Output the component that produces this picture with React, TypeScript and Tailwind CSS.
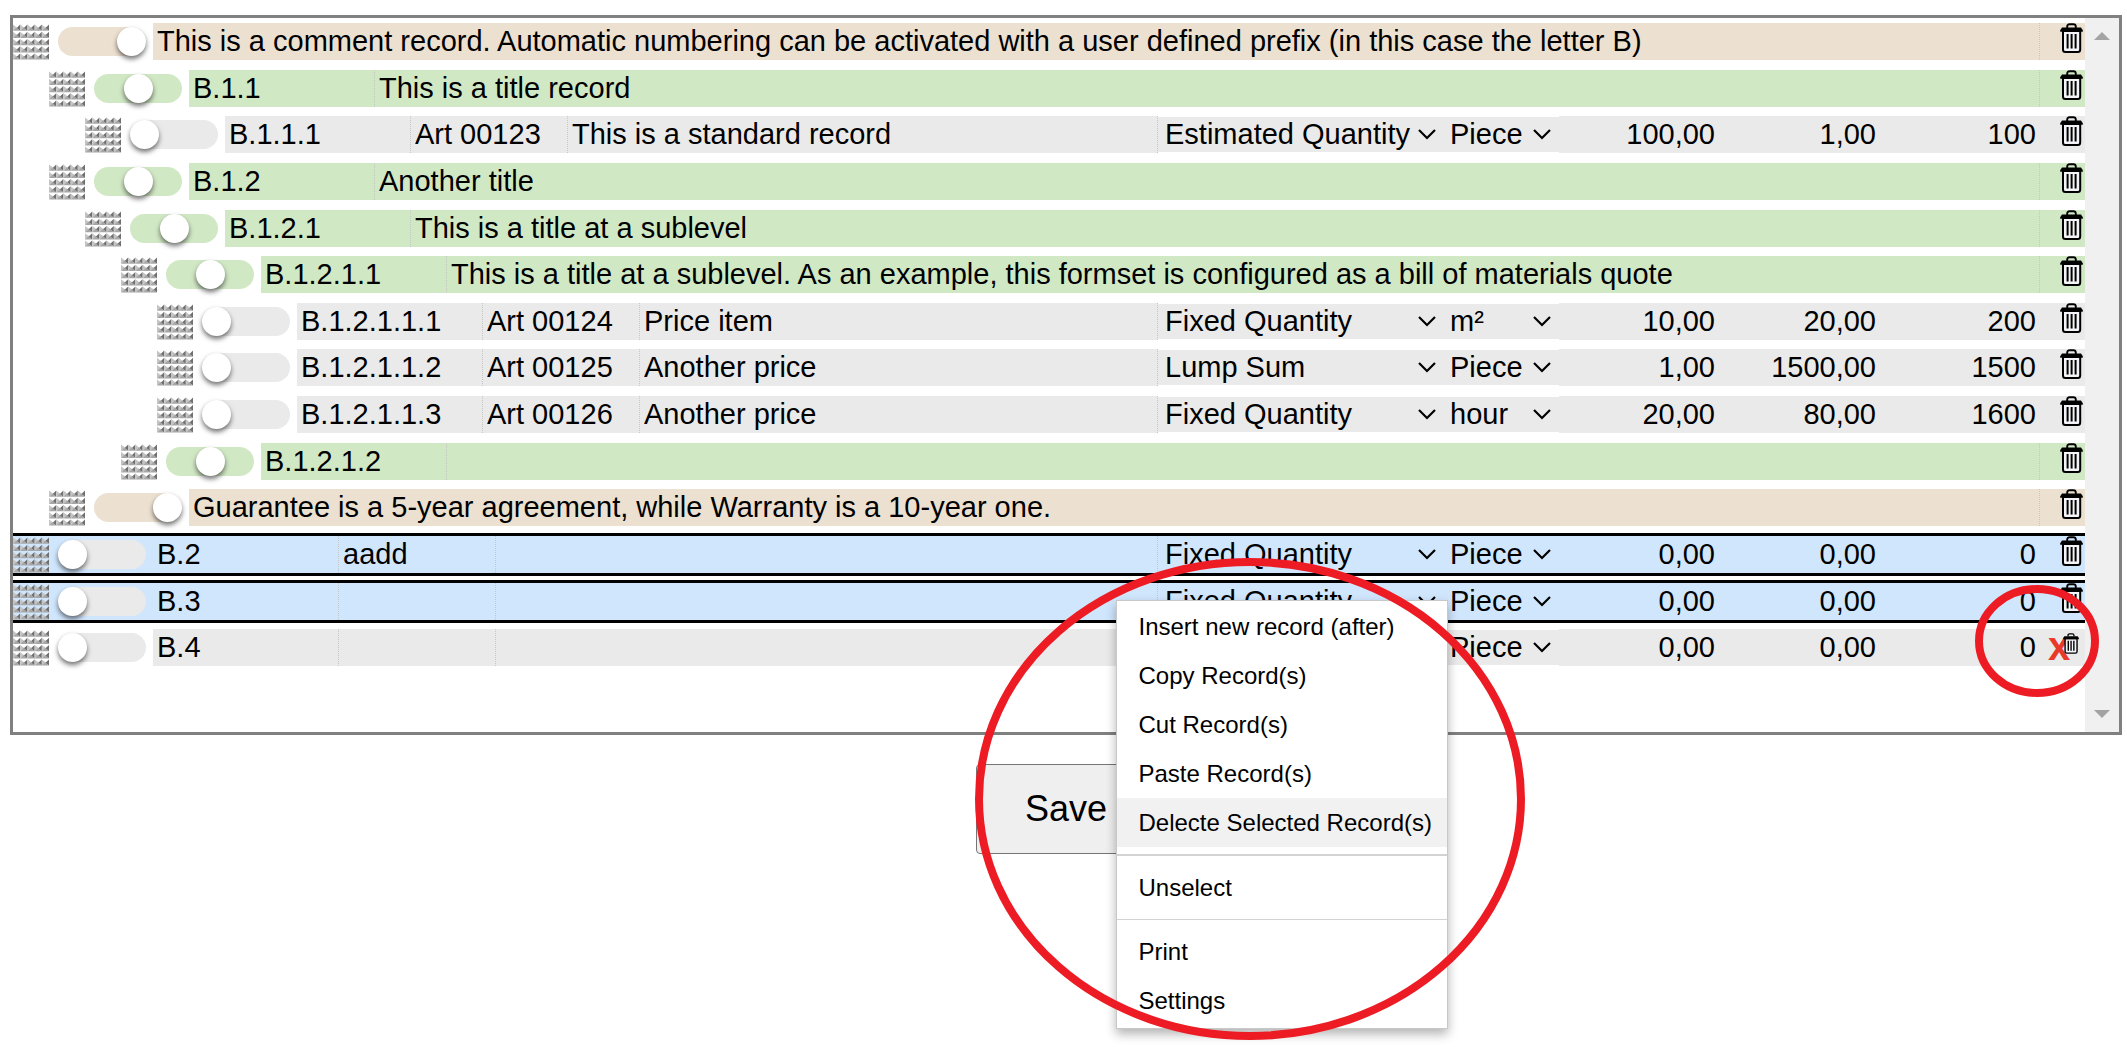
import React from "react";

type Kind = "comment" | "title" | "item";

interface RecordRow {
  kind: Kind;
  level: number;
  code?: string;
  article?: string;
  text?: string;
  quantityType?: string;
  unit?: string;
  quantity?: string;
  price?: string;
  total?: string;
  selected?: boolean;
  cut?: boolean;
}

const RECORDS: RecordRow[] = [
  { kind: "comment", level: 0, text: "This is a comment record. Automatic numbering can be activated with a user defined prefix (in this case the letter B)" },
  { kind: "title", level: 1, code: "B.1.1", text: "This is a title record" },
  { kind: "item", level: 2, code: "B.1.1.1", article: "Art 00123", text: "This is a standard record", quantityType: "Estimated Quantity", unit: "Piece", quantity: "100,00", price: "1,00", total: "100" },
  { kind: "title", level: 1, code: "B.1.2", text: "Another title" },
  { kind: "title", level: 2, code: "B.1.2.1", text: "This is a title at a sublevel" },
  { kind: "title", level: 3, code: "B.1.2.1.1", text: "This is a title at a sublevel. As an example, this formset is configured as a bill of materials quote" },
  { kind: "item", level: 4, code: "B.1.2.1.1.1", article: "Art 00124", text: "Price item", quantityType: "Fixed Quantity", unit: "m²", quantity: "10,00", price: "20,00", total: "200" },
  { kind: "item", level: 4, code: "B.1.2.1.1.2", article: "Art 00125", text: "Another price", quantityType: "Lump Sum", unit: "Piece", quantity: "1,00", price: "1500,00", total: "1500" },
  { kind: "item", level: 4, code: "B.1.2.1.1.3", article: "Art 00126", text: "Another price", quantityType: "Fixed Quantity", unit: "hour", quantity: "20,00", price: "80,00", total: "1600" },
  { kind: "title", level: 3, code: "B.1.2.1.2", text: "" },
  { kind: "comment", level: 1, text: "Guarantee is a 5-year agreement, while Warranty is a 10-year one." },
  { kind: "item", level: 0, code: "B.2", article: "aadd", text: "", quantityType: "Fixed Quantity", unit: "Piece", quantity: "0,00", price: "0,00", total: "0", selected: true },
  { kind: "item", level: 0, code: "B.3", article: "", text: "", quantityType: "Fixed Quantity", unit: "Piece", quantity: "0,00", price: "0,00", total: "0", selected: true },
  { kind: "item", level: 0, code: "B.4", article: "", text: "", quantityType: "Fixed Quantity", unit: "Piece", quantity: "0,00", price: "0,00", total: "0", cut: true },
];

const INDENT = ["pl-0", "pl-[36px]", "pl-[72px]", "pl-[108px]", "pl-[144px]"];
const FILL: Record<Kind, string> = { comment: "bg-[#ece0d1]", title: "bg-[#d1e8c5]", item: "bg-[#eaeaea]" };
const KNOB: Record<Kind, string> = { comment: "justify-end", title: "justify-center", item: "justify-start" };
const QUANTITY_TYPES = ["Estimated Quantity", "Fixed Quantity", "Lump Sum"];
const UNITS = ["Piece", "m²", "hour"];
const DIVIDER = "border-dotted border-[#c6c6c6]";

function DragHandle() {
  const cells = [0, 1, 2, 3, 4];
  return (
    <button type="button" aria-label="Move record" className="mt-px size-9 shrink-0 cursor-grab">
      <svg viewBox="0 0 36 36" className="block size-9">
        {cells.map((r) =>
          cells.map((c) => (
            <g key={`${r}-${c}`} transform={`translate(${c * 7.2} ${r * 7.2 + 0.6})`}>
              <path d="M0 0V6.2L4 3.1Z" fill="#c4c4c4" />
              <path d="M7.2 0L3.4 3.6L7.2 6.2Z" fill="#6f6f6f" />
              <path d="M0 6.2L3.6 2.8L7.2 6.2Z" fill="#a6a6a6" />
            </g>
          )),
        )}
      </svg>
    </button>
  );
}

function TrashIcon({ className }: { className: string }) {
  return (
    <svg viewBox="0 0 23 30" className={className} aria-hidden="true">
      <path d="M7.2 5V3.6Q7.2 1.2 9.6 1.2H13.4Q15.8 1.2 15.8 3.6V5" fill="none" stroke="#000" strokeWidth="1.9" />
      <path d="M3 8H20.2V26.4Q20.2 28.9 17.8 28.9H5.4Q3 28.9 3 26.4Z" fill="#f4f4f8" stroke="#000" strokeWidth="2" />
      <path d="M2 4.6H21L22.8 7.2V8.8H0.2V7.2Z" fill="#000" />
      <path d="M7.6 11V25.6M11.6 11V25.6M15.6 11V25.6" stroke="#000" strokeWidth="2" />
    </svg>
  );
}

function Chevron() {
  return (
    <svg viewBox="0 0 18 11" className="pointer-events-none absolute top-3 right-2 h-[11px] w-[18px]" aria-hidden="true">
      <path d="M1 1L9 9L17 1" fill="none" stroke="#000" strokeWidth="2.2" />
    </svg>
  );
}

function Picker({ label, value, options, className }: { label: string; value?: string; options: string[]; className: string }) {
  return (
    <div className={`relative ${className}`}>
      <select aria-label={label} defaultValue={value} className="block h-[35px] w-full appearance-none bg-transparent pl-1 leading-[35px] outline-none">
        {options.map((o) => (
          <option key={o}>{o}</option>
        ))}
      </select>
      <Chevron />
    </div>
  );
}

function Field({ label, value, className }: { label: string; value?: string; className: string }) {
  return <input aria-label={label} defaultValue={value} className={`h-[37px] min-w-0 leading-[37px] outline-none ${className}`} />;
}

function Row({ record }: { record: RecordRow }) {
  const { kind, selected } = record;
  const fill = selected ? "bg-transparent" : FILL[kind];
  return (
    <li className={INDENT[record.level]}>
      <div className={`flex h-[43px] border-y-[3px] ${selected ? "border-black bg-[#d0e6fd]" : "border-transparent"}`}>
        <DragHandle />
        <button
          type="button"
          aria-label="Record type"
          className={`mx-[9px] mt-1 mr-[7px] flex h-[29px] w-[88px] shrink-0 rounded-full ${FILL[kind]} ${KNOB[kind]}`}
        >
          <span className="size-[29px] rounded-full bg-white shadow-[0_3px_5px_rgba(0,0,0,0.55)]" />
        </button>
        {record.code !== undefined && <Field label="Number" value={record.code} className={`w-[186px] shrink-0 border-r pl-[4px] ${DIVIDER} ${fill}`} />}
        {record.article !== undefined && <Field label="Article" value={record.article} className={`w-[157px] shrink-0 border-r pl-[4px] ${DIVIDER} ${fill}`} />}
        <Field label="Description" value={record.text} className={`flex-1 border-r pl-[4px] ${DIVIDER} ${fill}`} />
        {kind === "item" && (
          <>
            <div className={`mt-px flex h-[35px] pl-[3px] ${fill}`}>
              <Picker label="Quantity type" value={record.quantityType} options={QUANTITY_TYPES} className="w-[285px] pr-[2px] [&>svg]:right-[10px]" />
              <Picker label="Unit" value={record.unit} options={UNITS} className="w-[113px]" />
            </div>
            <Field label="Quantity" value={record.quantity} className={`w-[160px] pr-1 text-right ${fill}`} />
            <Field label="Unit price" value={record.price} className={`w-[161px] pr-1 text-right ${fill}`} />
            <Field label="Total" value={record.total} className={`w-[160px] pr-1 text-right ${fill}`} />
          </>
        )}
        <div className={`relative flex w-[45px] shrink-0 justify-end pr-[2px] ${fill}`}>
          {record.cut ? (
            <>
              <span className="absolute -top-[3px] left-2 text-[40px] leading-[40px] font-bold text-[#e8392a]">x</span>
              <button type="button" aria-label="Delete record" className="relative mt-1 mr-1 h-[21px]">
                <TrashIcon className="block h-[21px] w-4" />
              </button>
              <svg viewBox="0 0 124 112" className="pointer-events-none absolute -top-11 -right-[14px] z-20 h-28 w-[124px] max-w-none" aria-hidden="true">
                <ellipse cx="62" cy="56" rx="58" ry="52" fill="none" stroke="#ed1c24" strokeWidth="8" />
              </svg>
            </>
          ) : (
            <button type="button" aria-label="Delete record" className="h-[30px]">
              <TrashIcon className="block h-[30px] w-[23px]" />
            </button>
          )}
        </div>
      </div>
    </li>
  );
}

function MenuItem({ children, active }: { children: string; active?: boolean }) {
  return (
    <button type="button" role="menuitem" className={`block h-[49px] w-full pl-[22px] text-left whitespace-nowrap ${active ? "bg-[#f1f1f1]" : ""}`}>
      {children}
    </button>
  );
}

function ContextMenu() {
  return (
    <div className="absolute top-[600px] left-1/2 z-10 ml-[52px] w-[332px]">
      <div role="menu" className="border border-[#c8c8c8] bg-white pt-px pb-[3px] text-[24px] shadow-[0_5px_10px_rgba(0,0,0,0.3)]">
        <MenuItem>Insert new record (after)</MenuItem>
        <MenuItem>Copy Record(s)</MenuItem>
        <MenuItem>Cut Record(s)</MenuItem>
        <MenuItem>Paste Record(s)</MenuItem>
        <MenuItem active>Delecte Selected Record(s)</MenuItem>
        <hr className="my-[7px] border-t-2 border-[#d3d3d3]" />
        <MenuItem>Unselect</MenuItem>
        <hr className="my-[7px] border-t border-[#d3d3d3]" />
        <MenuItem>Print</MenuItem>
        <MenuItem>Settings</MenuItem>
      </div>
      <svg viewBox="0 0 550 482" className="pointer-events-none absolute -top-[42px] -left-[141px] h-[482px] w-[550px] max-w-none" aria-hidden="true">
        <ellipse cx="275" cy="241" rx="271" ry="237" fill="none" stroke="#ed1c24" strokeWidth="8" />
      </svg>
    </div>
  );
}

export default function App() {
  return (
    <main className="relative min-h-screen overflow-hidden bg-white pt-[15px] pr-[5px] pl-[10px] font-['Liberation_Sans',Arial,sans-serif] text-[29px] text-black">
      <div className="flex border-[3px] border-[#808080]">
        <ul className="mt-[2px] mb-[59px] grid h-[653px] flex-1 auto-rows-fr">
          {RECORDS.map((r, i) => (
            <Row key={i} record={r} />
          ))}
        </ul>
        <div className="flex w-[34px] flex-col items-center justify-between bg-[#f0f0f0] py-[14px]">
          <svg viewBox="0 0 16 8" className="h-2 w-4" aria-hidden="true">
            <path d="M8 0L16 8H0Z" fill="#a3a3a3" />
          </svg>
          <svg viewBox="0 0 16 8" className="h-2 w-4" aria-hidden="true">
            <path d="M0 0H16L8 8Z" fill="#a3a3a3" />
          </svg>
        </div>
      </div>
      <div className="mt-[29px] flex justify-center">
        <button type="button" className="h-[90px] w-[180px] rounded-[4px] border border-[#767676] bg-[#efefef] text-[36px]">
          Save
        </button>
      </div>
      <ContextMenu />
    </main>
  );
}
